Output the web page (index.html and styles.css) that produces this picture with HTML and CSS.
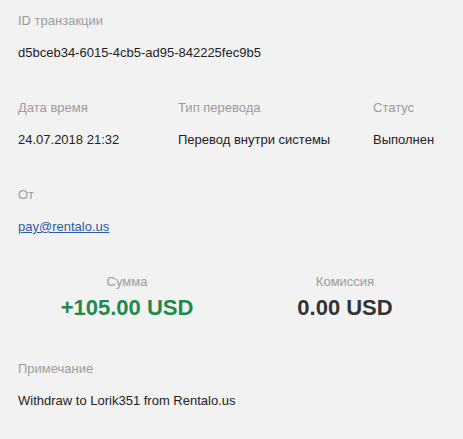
FILE: index.html
```html
<!DOCTYPE html>
<html lang="ru">
<head>
  <meta charset="UTF-8" />
  <meta name="viewport" content="width=device-width, initial-scale=1" />
  <title>Транзакция</title>
  <link rel="stylesheet" href="styles.css">
</head>
<body>

  <div class="details">

    <div class="section">
      <div class="label">ID транзакции</div>
      <div class="value">d5bceb34-6015-4cb5-ad95-842225fec9b5</div>
    </div>

    <div class="section row">
      <div class="col col-date">
        <div class="label">Дата время</div>
        <div class="value">24.07.2018 21:32</div>
      </div>
      <div class="col col-type">
        <div class="label">Тип перевода</div>
        <div class="value">Перевод внутри системы</div>
      </div>
      <div class="col">
        <div class="label">Статус</div>
        <div class="value">Выполнен</div>
      </div>
    </div>

    <div class="section">
      <div class="label">От</div>
      <div class="value"><a href="#">pay@rentalo.us</a></div>
    </div>

    <!-- Amounts -->
    <div class="section amounts">
      <div class="amount">
        <div class="label">Сумма</div>
        <div class="sum positive">+105.00 USD</div>
      </div>
      <div class="amount">
        <div class="label">Комиссия</div>
        <div class="sum">0.00 USD</div>
      </div>
    </div>

    <div class="section">
      <div class="label">Примечание</div>
      <div class="value">Withdraw to Lorik351 from Rentalo.us</div>
    </div>

  </div>

</body>
</html>
```

FILE: styles.css
```css
* {
  box-sizing: border-box;
}

body {
  font-family: "Liberation Sans", Arial, sans-serif;
  font-size: 13px;
  background-color: #f2f2f2;
  color: #222;
  margin: 0;
}

.details {
  padding: 13px 9px 20px 18px;
}

.section {
  margin-bottom: 39px;
}

.section:last-child {
  margin-bottom: 0;
}

.label {
  color: #9c9c9c;
  line-height: 16px;
  margin-bottom: 16px;
}

.value {
  line-height: 16px;
}

.value a {
  color: #2b5aa8;
}

.row {
  display: flex;
}

.col-date {
  width: 160px;
}

.col-type {
  width: 195px;
}

.amounts {
  display: grid;
  grid-template-columns: 1fr 1fr;
  text-align: center;
  margin-bottom: 40px;
}

.amounts .label {
  margin-bottom: 5px;
}

.sum {
  font-size: 22px;
  font-weight: bold;
  line-height: 26px;
  color: #333;
}

.sum.positive {
  color: #1f8a4c;
}
```
